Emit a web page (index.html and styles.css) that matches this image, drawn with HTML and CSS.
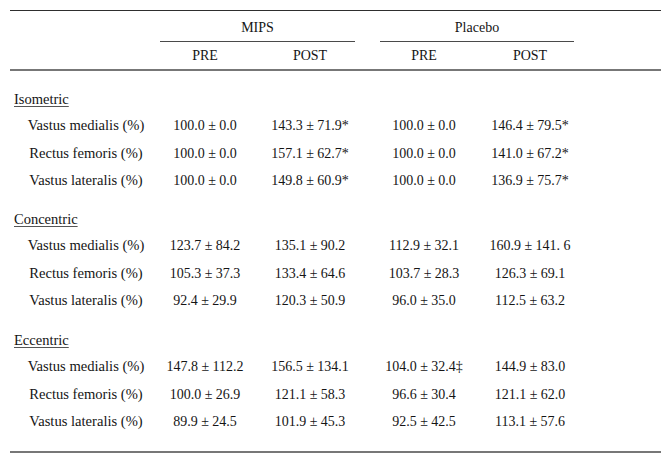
FILE: index.html
```html
<!DOCTYPE html>
<html>
<head>
<meta charset="utf-8">
<link rel="stylesheet" href="styles.css">
</head>
<body>
<div class="table">
  <div class="row grp">
    <div></div>
    <div class="span-mips"><div class="grp-label">MIPS</div></div>
    <div class="span-placebo"><div class="grp-label">Placebo</div></div>
  </div>
  <div class="row sub">
    <div></div>
    <div>PRE</div><div>POST</div><div>PRE</div><div>POST</div>
  </div>
  <div class="body">
    <div class="section first"><span>Isometric</span></div>
    <div class="row data"><div class="lbl">Vastus medialis (%)</div><div>100.0 ± 0.0</div><div>143.3 ± 71.9*</div><div>100.0 ± 0.0</div><div>146.4 ± 79.5*</div></div>
    <div class="row data"><div class="lbl">Rectus femoris (%)</div><div>100.0 ± 0.0</div><div>157.1 ± 62.7*</div><div>100.0 ± 0.0</div><div>141.0 ± 67.2*</div></div>
    <div class="row data"><div class="lbl">Vastus lateralis (%)</div><div>100.0 ± 0.0</div><div>149.8 ± 60.9*</div><div>100.0 ± 0.0</div><div>136.9 ± 75.7*</div></div>

    <div class="section"><span>Concentric</span></div>
    <div class="row data"><div class="lbl">Vastus medialis (%)</div><div>123.7 ± 84.2</div><div>135.1 ± 90.2</div><div>112.9 ± 32.1</div><div>160.9 ± 141. 6</div></div>
    <div class="row data"><div class="lbl">Rectus femoris (%)</div><div>105.3 ± 37.3</div><div>133.4 ± 64.6</div><div>103.7 ± 28.3</div><div>126.3 ± 69.1</div></div>
    <div class="row data"><div class="lbl">Vastus lateralis (%)</div><div>92.4 ± 29.9</div><div>120.3 ± 50.9</div><div>96.0 ± 35.0</div><div>112.5 ± 63.2</div></div>

    <div class="section last"><span>Eccentric</span></div>
    <div class="row data"><div class="lbl">Vastus medialis (%)</div><div>147.8 ± 112.2</div><div>156.5 ± 134.1</div><div>104.0 ± 32.4‡</div><div>144.9 ± 83.0</div></div>
    <div class="row data"><div class="lbl">Rectus femoris (%)</div><div>100.0 ± 26.9</div><div>121.1 ± 58.3</div><div>96.6 ± 30.4</div><div>121.1 ± 62.0</div></div>
    <div class="row data"><div class="lbl">Vastus lateralis (%)</div><div>89.9 ± 24.5</div><div>101.9 ± 45.3</div><div>92.5 ± 42.5</div><div>113.1 ± 57.6</div></div>
  </div>
</div>
</body>
</html>
```

FILE: styles.css
```css
html, body {
  margin: 0;
  padding: 0;
  background: #ffffff;
}
body {
  font-family: "Liberation Serif", "Times New Roman", serif;
  font-size: 14px;
  color: #151515;
}
.table {
  margin: 10px 0 0 10px;
  width: 651px;
  border-top: 1px solid #2e2e2e;
}
.row {
  display: grid;
  grid-template-columns: 152px 86px 124px 104px 108px 1fr;
  text-align: center;
  white-space: nowrap;
}
.grp {
  padding-top: 4px;
}
.span-mips {
  grid-column: 2 / 4;
  margin: 0 17px 0 -2px;
}
.span-placebo {
  grid-column: 4 / 6;
  margin: 0 10px 0 8px;
}
.grp-label {
  line-height: 26px;
  border-bottom: 1px solid #4a4a4a;
}
.sub {
  line-height: 27px;
  border-bottom: 2px solid #777777;
}
.body {
  padding-bottom: 15.5px;
  border-bottom: 2px solid #777777;
}
.section {
  font-size: 14.5px;
  line-height: 26px;
  padding-left: 4px;
  margin-top: 11.5px;
}
.section.first {
  margin-top: 15px;
}
.section.last {
  margin-top: 12.5px;
}
.section span {
  text-decoration: underline;
  text-decoration-color: #555555;
  text-underline-offset: 2px;
}
.data {
  line-height: 27.5px;
}
.lbl {
  font-size: 14.6px;
}
```
